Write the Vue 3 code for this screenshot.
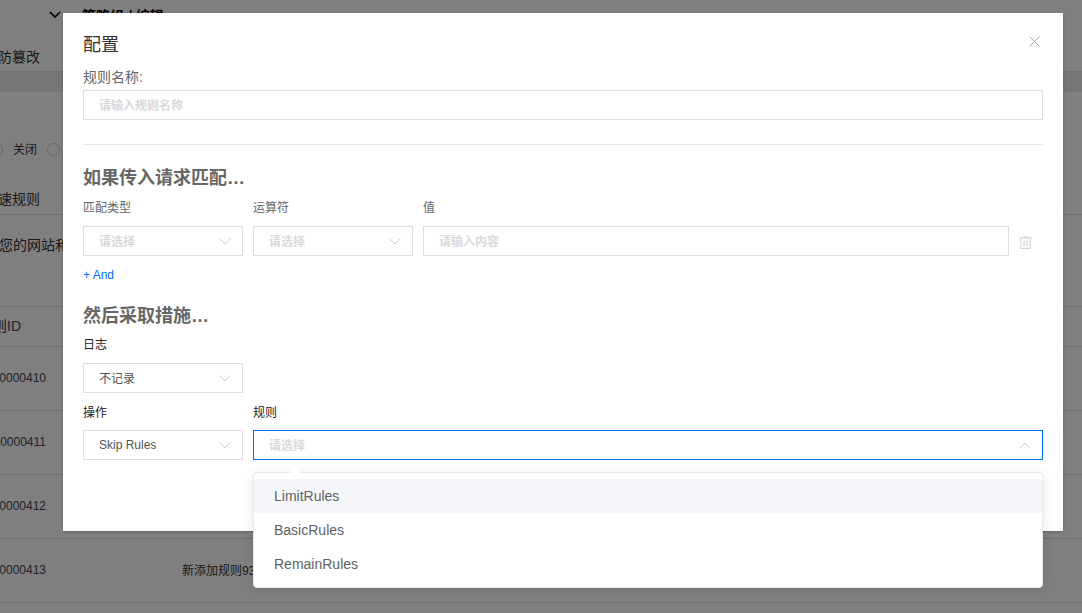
<script setup>
const rows = [
  { id: '10000410', name: '' },
  { id: '10000411', name: '' },
  { id: '10000412', name: '' },
  { id: '10000413', name: '新添加规则93' }
]
const options = ['LimitRules', 'BasicRules', 'RemainRules']
</script>

<template>
  <div class="page">
    <div class="bg">
      <div class="crumb">
        <svg class="crumb-arrow" width="14" height="10" viewBox="0 0 14 10"><path d="M2 2l5 5 5-5" fill="none" stroke="#000" stroke-width="1.6" /></svg>
        <span class="crumb-text">策略组 / 编辑</span>
      </div>
      <div class="tab">防篡改</div>
      <div class="band"></div>
      <div class="radios">
        <i class="radio"></i><span>关闭</span><i class="radio"></i>
      </div>
      <div class="sub">速规则</div>
      <div class="desc">您的网站和</div>
      <div class="row head"><span class="id head-id">规则ID</span></div>
      <div v-for="r in rows" :key="r.id" class="row">
        <span class="id">{{ r.id }}</span><span class="name">{{ r.name }}</span>
      </div>
    </div>
    <div class="mask"></div>

    <div class="modal">
      <button class="close" aria-label="关闭">
        <svg width="11" height="11" viewBox="0 0 11 11"><path d="M.5.5l10 10M10.5.5l-10 10" stroke="#a3a6ad" stroke-width="1" fill="none" /></svg>
      </button>
      <h2 class="title">配置</h2>
      <div class="name-label">规则名称:</div>
      <div class="field full"><span class="ph">请输入规则名称</span></div>
      <div class="divider"></div>

      <h3 class="section first-section">如果传入请求匹配…</h3>
      <div class="cols labels match-labels">
        <span class="lab w160">匹配类型</span>
        <span class="lab w160">运算符</span>
        <span class="lab">值</span>
      </div>
      <div class="cols">
        <div class="field w160"><span class="ph">请选择</span><svg class="chev" width="12" height="7" viewBox="0 0 12 7"><path d="M.5.5L6 6 11.5.5" /></svg></div>
        <div class="field w160"><span class="ph">请选择</span><svg class="chev" width="12" height="7" viewBox="0 0 12 7"><path d="M.5.5L6 6 11.5.5" /></svg></div>
        <div class="field value"><span class="ph">请输入内容</span></div>
        <svg class="trash" width="13" height="14" viewBox="0 0 13 14">
          <path d="M4.5 1h4v1.5h-4z" fill="#d4d6dd" />
          <path d="M0 3h13" stroke="#d4d6dd" stroke-width="1.2" />
          <path d="M1.8 3.5v9.8h9.4V3.5" fill="none" stroke="#d4d6dd" stroke-width="1.2" />
          <path d="M5 5.5v5.5M8 5.5v5.5" stroke="#d4d6dd" stroke-width="1.4" />
        </svg>
      </div>
      <a class="add">+ And</a>

      <h3 class="section second-section">然后采取措施…</h3>
      <div class="lab dark log-label">日志</div>
      <div class="field w160"><span class="val cjk">不记录</span><svg class="chev" width="12" height="7" viewBox="0 0 12 7"><path d="M.5.5L6 6 11.5.5" /></svg></div>
      <div class="cols labels op-labels">
        <span class="lab dark w160">操作</span>
        <span class="lab dark">规则</span>
      </div>
      <div class="cols">
        <div class="field w160"><span class="val">Skip Rules</span><svg class="chev" width="12" height="7" viewBox="0 0 12 7"><path d="M.5.5L6 6 11.5.5" /></svg></div>
        <div class="field grow active">
          <span class="ph">请选择</span>
          <svg class="chev" width="12" height="7" viewBox="0 0 12 7"><path d="M.5 6.5L6 1l5.5 5.5" /></svg>
          <div class="dropdown">
            <i class="pointer"></i>
            <div v-for="(o, i) in options" :key="o" class="option" :class="{ hover: i === 0 }">{{ o }}</div>
          </div>
        </div>
      </div>
    </div>
  </div>
</template>

<style scoped>
.page {
  position: relative;
  width: 1082px;
  height: 613px;
  overflow: hidden;
  background: #fff;
  font-family: "Liberation Sans", "Noto Sans CJK SC", sans-serif;
  color: #000;
}
.bg { color: #333; font-size: 14px; }
.crumb { display: flex; align-items: center; height: 30px; padding-left: 48px; }
.crumb-arrow { margin-right: 20px; }
.crumb-text { font-size: 14px; font-weight: 700; color: #000; }
.tab { height: 42px; line-height: 54px; margin-left: -2px; border-bottom: 1px solid #ddd; box-sizing: border-box; }
.band { height: 20px; background: #ececee; }
.radios { display: flex; align-items: center; height: 20px; margin: 47px 0 0 -10px; font-size: 12px; }
.radios span { margin: 0 10px 2px; }
.radio { flex: none; width: 13px; height: 13px; border: 1px solid #ccc; box-sizing: border-box; border-radius: 50%; background: #fff; }
.sub { height: 56px; box-sizing: border-box; padding-top: 30px; line-height: 20px; margin-left: -2px; border-bottom: 1px solid #ddd; }
.desc { height: 91px; line-height: 60px; margin-left: -1px; white-space: nowrap; }
.row { display: flex; align-items: center; height: 64px; padding-bottom: 2px; border-top: 1px solid #ddd; box-sizing: border-box; }
.row.head { height: 40px; padding-bottom: 4px; }
.row:last-child { height: 65px; border-bottom: 1px solid #ddd; }
.id { width: 46px; flex: none; overflow: hidden; white-space: nowrap; font-size: 12px; color: #445; direction: rtl; text-align: right; }
.head-id { width: 21px; font-size: 14px; }
.name { margin-left: 136px; font-size: 12px; }

.mask { position: absolute; inset: 0; background: rgba(0, 0, 0, .5); }

.modal {
  position: absolute;
  left: 63px;
  top: 13px;
  width: 1000px;
  height: 518px;
  box-sizing: border-box;
  padding: 20px 20px 0;
  background: #fff;
  box-shadow: 0 1px 3px rgba(0, 0, 0, .2);
}
.close { position: absolute; right: 23px; top: 23px; display: block; width: 11px; height: 11px; padding: 0; border: 0; background: none; line-height: 0; }
.title { margin: 0; font-size: 18px; line-height: 24px; font-weight: 400; color: #333; }
.name-label { margin-top: 10px; font-size: 14px; line-height: 20px; color: #666; }
.field {
  position: relative;
  display: flex;
  align-items: center;
  flex: none;
  height: 30px;
  box-sizing: border-box;
  padding-left: 15px;
  border: 1px solid #e0e0e0;
  font-size: 12px;
}
.full { margin-top: 3px; }
.w160 { width: 160px; flex: none; }
.value { width: 586px; }
.grow { flex: 1; }
.ph { margin-bottom: 2px; color: #d9d9d9; font-weight: 700; }
.val { color: #555; }
.cjk { margin-bottom: 2px; }
.chev { position: absolute; right: 11px; top: 50%; margin-top: -3px; fill: none; stroke: #ccced6; stroke-width: 1; }
.divider { height: 1px; margin-top: 24px; background: #e8e8ea; }
.section { margin: 0; font-size: 18px; line-height: 24px; font-weight: 700; color: #666; }
.first-section { margin-top: 21px; }
.second-section { margin-top: 21px; }
.cols { display: flex; align-items: center; gap: 10px; }
.labels { height: 27px; }
.match-labels { margin-top: 4px; margin-bottom: 5px; }
.lab { font-size: 12px; line-height: 18px; color: #666; }
.dark { color: #222; }
.log-label { margin-top: 8px; margin-bottom: 9px; }
.op-labels { margin-top: 6px; margin-bottom: 3px; height: 28px; }
.trash { flex: none; margin-top: 2px; }
.add { display: block; margin-top: 11px; font-size: 12px; line-height: 16px; color: #006eff; }
.active { border-color: #006eff; }
.dropdown {
  position: absolute;
  left: -1px;
  right: -1px;
  top: 41px;
  padding: 6px 0;
  background: #fff;
  border: 1px solid #e4e7ed;
  border-radius: 4px;
  box-shadow: 0 2px 12px rgba(0, 0, 0, .1);
  z-index: 2;
}
.pointer {
  position: absolute;
  left: 35px;
  top: -6px;
  width: 0;
  height: 0;
  border-left: 6px solid transparent;
  border-right: 6px solid transparent;
  border-bottom: 6px solid #fff;
}
.option { height: 34px; line-height: 34px; padding: 0 20px; font-size: 14px; color: #606266; }
.hover { background: #f5f7fa; }
</style>
